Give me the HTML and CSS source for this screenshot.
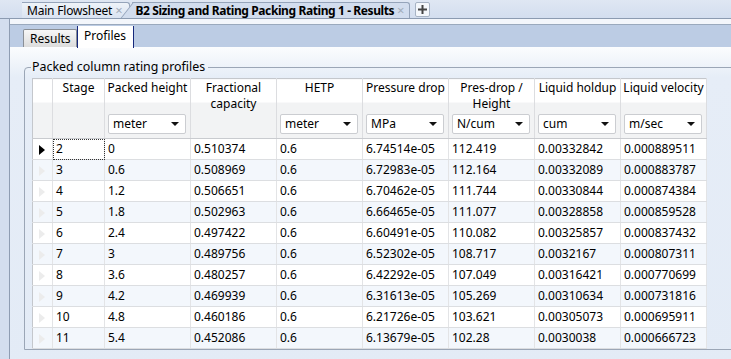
FILE: index.html
```html
<!DOCTYPE html>
<html lang="en">
<head>
    <meta charset="UTF-8">
    <title>B2 Sizing and Rating Packing Rating 1 - Results</title>
    <link rel="stylesheet" href="styles.css">
</head>
<body>
    <div class="tabbar">
        <div class="doc-tab">Main Flowsheet <span class="close">&times;</span></div>
        <div class="doc-tab active">B2 Sizing and Rating Packing Rating 1 - Results <span class="close">&times;</span></div>
        <div class="add-tab">
            <svg width="11" height="11" viewBox="0 0 11 11"><path d="M5.5 1v9M1 5.5h9" stroke="#444" stroke-width="2"/></svg>
        </div>
    </div>

    <div class="frame">
        <div class="subtabs">
            <div class="subtab">Results</div>
            <div class="subtab selected">Profiles</div>
        </div>

        <div class="content">
            <fieldset class="group">
                <legend>Packed column rating profiles</legend>
                <table class="grid">
                    <colgroup>
                        <col class="c-rowhead">
                        <col class="c-stage">
                        <col span="7" class="c-val">
                    </colgroup>
                    <thead>
                        <tr>
                            <th class="rowhead"></th>
                            <th><div class="hd"><span>Stage</span></div></th>
                            <th><div class="hd"><span>Packed height</span><div class="unit">meter<i></i></div></div></th>
                            <th><div class="hd"><span>Fractional capacity</span></div></th>
                            <th><div class="hd"><span>HETP</span><div class="unit">meter<i></i></div></div></th>
                            <th><div class="hd"><span>Pressure drop</span><div class="unit">MPa<i></i></div></div></th>
                            <th><div class="hd"><span>Pres-drop /<br>Height</span><div class="unit">N/cum<i></i></div></div></th>
                            <th><div class="hd"><span>Liquid holdup</span><div class="unit">cum<i></i></div></div></th>
                            <th><div class="hd"><span>Liquid velocity</span><div class="unit">m/sec<i></i></div></div></th>
                        </tr>
                    </thead>
                    <tbody>
                        <tr class="current"><td class="rowhead"><span class="mark"></span></td><td class="focus">2</td><td>0</td><td>0.510374</td><td>0.6</td><td>6.74514e-05</td><td>112.419</td><td>0.00332842</td><td>0.000889511</td></tr>
                        <tr><td class="rowhead"><span class="mark"></span></td><td>3</td><td>0.6</td><td>0.508969</td><td>0.6</td><td>6.72983e-05</td><td>112.164</td><td>0.00332089</td><td>0.000883787</td></tr>
                        <tr><td class="rowhead"><span class="mark"></span></td><td>4</td><td>1.2</td><td>0.506651</td><td>0.6</td><td>6.70462e-05</td><td>111.744</td><td>0.00330844</td><td>0.000874384</td></tr>
                        <tr><td class="rowhead"><span class="mark"></span></td><td>5</td><td>1.8</td><td>0.502963</td><td>0.6</td><td>6.66465e-05</td><td>111.077</td><td>0.00328858</td><td>0.000859528</td></tr>
                        <tr><td class="rowhead"><span class="mark"></span></td><td>6</td><td>2.4</td><td>0.497422</td><td>0.6</td><td>6.60491e-05</td><td>110.082</td><td>0.00325857</td><td>0.000837432</td></tr>
                        <tr><td class="rowhead"><span class="mark"></span></td><td>7</td><td>3</td><td>0.489756</td><td>0.6</td><td>6.52302e-05</td><td>108.717</td><td>0.0032167</td><td>0.000807311</td></tr>
                        <tr><td class="rowhead"><span class="mark"></span></td><td>8</td><td>3.6</td><td>0.480257</td><td>0.6</td><td>6.42292e-05</td><td>107.049</td><td>0.00316421</td><td>0.000770699</td></tr>
                        <tr><td class="rowhead"><span class="mark"></span></td><td>9</td><td>4.2</td><td>0.469939</td><td>0.6</td><td>6.31613e-05</td><td>105.269</td><td>0.00310634</td><td>0.000731816</td></tr>
                        <tr><td class="rowhead"><span class="mark"></span></td><td>10</td><td>4.8</td><td>0.460186</td><td>0.6</td><td>6.21726e-05</td><td>103.621</td><td>0.00305073</td><td>0.000695911</td></tr>
                        <tr><td class="rowhead"><span class="mark"></span></td><td>11</td><td>5.4</td><td>0.452086</td><td>0.6</td><td>6.13679e-05</td><td>102.28</td><td>0.0030038</td><td>0.000666723</td></tr>
                    </tbody>
                </table>
            </fieldset>
        </div>
    </div>
</body>
</html>
```

FILE: styles.css
```css
/* Page and window chrome */
html, body {
    margin: 0;
    width: 731px;
    height: 359px;
    overflow: hidden;
}

body {
    background-color: #d3deef;
    font-family: 'Noto Sans', sans-serif;
    font-size: 12px;
    color: #000;
}

/* Document tabs along the top */
.tabbar {
    height: 18px;
    border-bottom: 1px solid #8c9bb1;
    display: flex;
    align-items: flex-end;
    padding-left: 22px;
    background: linear-gradient(#dfe7f3, #d3deef);
}

.doc-tab {
    position: relative;
    height: 15px;
    line-height: 15px;
    padding: 0 7px 0 5px;
    border-top: 1px solid #95a4ba;
    border-right: 1px solid #95a4ba;
    border-radius: 0 3px 0 0;
    background: linear-gradient(#eef3f9, #dae3f1);
    white-space: nowrap;
    letter-spacing: -0.2px;
}

.doc-tab::before {
    content: '';
    position: absolute;
    left: -9px;
    top: -1px;
    bottom: 0;
    width: 14px;
    border-left: 1px solid #95a4ba;
    border-top: 1px solid #95a4ba;
    background: linear-gradient(#eef3f9, #dae3f1);
    transform: skewX(-38deg);
    z-index: -1;
}

.doc-tab.active {
    font-weight: bold;
    letter-spacing: -0.4px;
    padding: 0 5px 0 3px;
    margin-left: 2px;
    background: #d2ddee;
    z-index: 1;
}

.doc-tab.active::before {
    left: -5px;
    width: 10px;
    background: #d2ddee;
}

.close {
    font-weight: normal;
    color: #a3adba;
    font-size: 13px;
}

.add-tab {
    width: 13px;
    height: 13px;
    margin-bottom: 1px;
    margin-left: 5px;
    border: 1px solid #a7b3c4;
    border-radius: 2px;
    background: #f4f7fb;
    display: flex;
    align-items: center;
    justify-content: center;
}

/* Document frame */
.frame {
    margin-left: 9px;
    border-left: 1px solid #8e9db3;
    padding-top: 5px;
    background-color: #f3f6fb;
    height: 335px;
}

.subtabs {
    height: 22px;
    border-top: 1px solid #9aa9bd;
    background-color: #bccce4;
    display: flex;
    align-items: flex-end;
    padding-left: 13px;
}

.subtab {
    box-sizing: border-box;
    width: 54px;
    height: 18px;
    line-height: 18px;
    padding-left: 6px;
    border: 1px solid #8a8f96;
    border-bottom: none;
    border-radius: 2px 2px 0 0;
    background: linear-gradient(#f7f7f7, #dcdcdc);
}

.subtab.selected {
    width: 57px;
    height: 22px;
    line-height: 20px;
    border: none;
    border-left: 1px solid #16287c;
    border-right: 1px solid #16287c;
    border-radius: 0;
    background: #fff;
    margin-bottom: -1px;
    position: relative;
}

/* Content area with the group box */
.content {
    padding: 12px 0 0 14px;
    height: 312px;
    overflow: hidden;
    background: linear-gradient(#fbfcfe, #e6edf7 30px, #e3ebf6);
}

.group {
    margin: 0;
    width: 720px;
    padding: 3px 0 0 7px;
    border: 1px solid #9ba6b6;
    border-radius: 4px 0 0 0;
}

.group legend {
    padding: 0 3px 0 1px;
    margin-left: -1px;
    line-height: 16px;
    font-size: 12.4px;
}

/* Data grid */
.grid {
    border-collapse: collapse;
    table-layout: fixed;
    width: 675px;
    background: #fff;
    border: 1px solid #c4c7cc;
}

.c-rowhead { width: 20px; }
.c-stage { width: 52px; }
.c-val { width: 86px; }

.grid th {
    height: 59px;
    padding: 0;
    font-weight: normal;
    vertical-align: top;
    border-right: 1px solid #dcdde0;
    border-bottom: 1px solid #c9cbcf;
    background: linear-gradient(#fff 0, #fff 23px, #f2f3f4 23px);
}

.hd {
    height: 59px;
    display: flex;
    flex-direction: column;
    justify-content: space-between;
    text-align: center;
    line-height: 16px;
}

.hd span {
    padding-top: 1px;
}

.unit {
    height: 18px;
    line-height: 18px;
    margin: 0 4px 4px 3px;
    padding-left: 4px;
    text-align: left;
    background: #fff;
    border: 1px solid #cbcdd1;
    border-radius: 2px;
    display: flex;
    justify-content: space-between;
    align-items: center;
}

.unit i {
    width: 0;
    height: 0;
    margin-right: 6px;
    border-top: 4px solid #111;
    border-left: 4px solid transparent;
    border-right: 4px solid transparent;
}

.grid td {
    height: 20px;
    padding: 0 0 0 3px;
    line-height: 20px;
    white-space: nowrap;
    border-right: 1px solid #e3e4e6;
    border-bottom: 1px solid #dcdee1;
}

.grid tbody tr:nth-child(even) td {
    background-color: #f3f7fc;
}

.grid td.rowhead {
    background-color: #fff;
    padding-left: 6px;
}

.mark {
    display: inline-block;
    vertical-align: middle;
    width: 0;
    height: 0;
    border-left: 6px solid #ececec;
    border-top: 5px solid transparent;
    border-bottom: 5px solid transparent;
}

.current .mark {
    border-left-color: #000;
}

.grid td.focus {
    outline: 1px dotted #333;
    outline-offset: -1px;
}
```
